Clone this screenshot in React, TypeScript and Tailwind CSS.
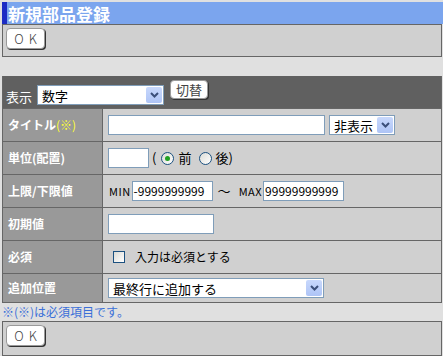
import React from 'react';

const font = { fontFamily: '"Noto Sans CJK JP", "Noto Sans", sans-serif' };

const Chevron = () => (
  <svg width="9" height="6" viewBox="0 0 9 6">
    <path d="M1 1 L4.5 4.5 L8 1" stroke="#3b4f7a" strokeWidth="2" fill="none" />
  </svg>
);

const FakeSelect = ({ value, className }: { value: string; className: string }) => (
  <div className={`flex items-center h-[20px] bg-white border border-[#7f9db9] ${className}`}>
    <span className="flex-1 pl-[4px] text-[13px] leading-none text-black whitespace-nowrap">{value}</span>
    <span className="w-[16px] h-[16px] mr-[1px] flex items-center justify-center bg-gradient-to-b from-[#c8d8fc] to-[#aec4f6] rounded-[2px]">
      <Chevron />
    </span>
  </div>
);

const ImgButton = ({ label, className }: { label: string; className: string }) => (
  <button
    type="button"
    className={`flex items-center justify-center bg-white border border-[#9a9a9a] rounded-[4px] shadow-[1px_1px_0_#333] text-[#444] ${className}`}
  >
    {label}
  </button>
);

const Row = ({ label, children, last }: { label: React.ReactNode; children: React.ReactNode; last?: boolean }) => (
  <div className={`flex border-t border-[#666] ${last ? 'h-[29px]' : 'h-[33px]'}`}>
    <div className="w-[100px] shrink-0 bg-[#999999] border-r border-[#666] flex items-center pl-[5px] text-white font-bold text-[12px]">
      {label}
    </div>
    <div className="flex-1 bg-[#d0d0d0] flex items-center pl-[5px] text-[12px] text-black">{children}</div>
  </div>
);

const Radio = ({ checked }: { checked?: boolean }) => (
  <span className="w-[13px] h-[13px] rounded-full border border-[#1c5180] bg-gradient-to-br from-[#dcdcd6] to-white flex items-center justify-center">
    {checked && <span className="w-[5px] h-[5px] rounded-full bg-[#21a121]" />}
  </span>
);

export default function App() {
  return (
    <div className="w-[443px] h-[356px] overflow-hidden bg-[#e0e0e0] pt-[2px] pl-[2px]" style={font}>
      <div className="w-[441px] h-[22px] bg-[#7ba5ee] border-l-[5px] border-[#1c2cc4] flex items-center pl-[1px] text-white font-bold text-[17px] leading-none">
        新規部品登録
      </div>
      <div className="w-[440px] h-[33px] border border-[#666] bg-[#d0d0d0] pl-[3px] pt-[3px]">
        <ImgButton label="OK" className="w-[39px] h-[21px] text-[13px] tracking-[5px] pl-[5px] font-light" />
      </div>

      <div className="w-[440px] mt-[19px] border-x border-b border-[#666]">
        <div className="h-[32px] bg-[#606060] flex items-end pl-[3px] pb-[3px]">
          <span className="text-white text-[13px] leading-none mb-[2px]">表示</span>
          <FakeSelect value="数字" className="w-[127px] ml-[5px]" />
          <ImgButton label="切替" className="self-start mt-[4px] ml-[6px] w-[38px] h-[19px] text-[13px]" />
        </div>
        <Row
          label={
            <>
              タイトル<span className="text-[#ffff33] font-normal">(※)</span>
            </>
          }
        >
          <div className="w-[217px] h-[20px] bg-white border border-[#7f9db9]" />
          <FakeSelect value="非表示" className="w-[66px] ml-[4px]" />
        </Row>
        <Row label="単位(配置)">
          <div className="w-[41px] h-[20px] bg-white border border-[#7f9db9]" />
          <span className="ml-[3px] mr-[5px] text-[13px]">(</span>
          <Radio checked />
          <span className="ml-[4px] text-[13px]">前</span>
          <span className="ml-[8px]"><Radio /></span>
          <span className="ml-[3px] text-[13px]">後)</span>
        </Row>
        <Row label="上限/下限値">
          <span className="ml-[1px] text-[11px] tracking-[0.5px]">MIN</span>
          <div className="ml-[1px] w-[81px] h-[20px] bg-white border border-[#7f9db9] flex items-center pl-[1px] text-[12px] leading-none">
            -9999999999
          </div>
          <span className="ml-[5px] text-[13px]">〜</span>
          <span className="ml-[8px] text-[11px] tracking-[0.5px]">MAX</span>
          <div className="ml-[1px] w-[81px] h-[20px] bg-white border border-[#7f9db9] flex items-center pl-[1px] text-[12px] leading-none">
            99999999999
          </div>
        </Row>
        <Row label="初期値">
          <div className="w-[106px] h-[20px] bg-white border border-[#7f9db9]" />
        </Row>
        <Row label="必須">
          <span className="ml-[5px] w-[12px] h-[12px] border border-[#1c5180] bg-gradient-to-br from-[#dcdcd6] to-white" />
          <span className="ml-[10px] text-[12px]">入力は必須とする</span>
        </Row>
        <Row label="追加位置" last>
          <FakeSelect value="最終行に追加する" className="w-[216px]" />
        </Row>
      </div>

      <div className="h-[18px] flex items-center text-[#3a6fd8] text-[12px] leading-none">※(※)は必須項目です。</div>

      <div className="w-[440px] h-[35px] border border-[#666] bg-[#d0d0d0] pl-[3px] pt-[3px]">
        <ImgButton label="OK" className="w-[39px] h-[21px] text-[13px] tracking-[5px] pl-[5px] font-light" />
      </div>
    </div>
  );
}
